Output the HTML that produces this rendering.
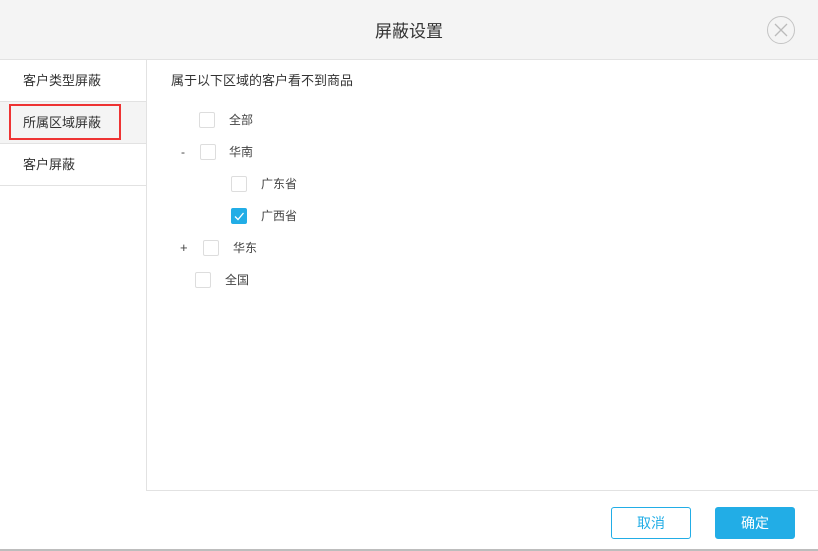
<!DOCTYPE html>
<html><head><meta charset="utf-8"><style>
*{margin:0;padding:0;box-sizing:border-box}
body{width:818px;height:551px;background:#fff;font-family:"Liberation Sans","Noto Sans CJK SC",sans-serif;color:#333;position:relative;overflow:hidden;font-size:13px}
.hdr{position:absolute;left:0;top:0;width:818px;height:60px;background:#f4f4f4;border-bottom:1px solid #e2e2e2}
.hdr .t{position:absolute;left:0;right:0;top:17px;text-align:center;font-size:17px;color:#333}
.close{position:absolute;left:767px;top:16px;width:28px;height:28px;border:1px solid #c4c4c4;border-radius:50%}
.side{position:absolute;left:0;top:60px;width:147px;height:430px;border-right:1px solid #e2e2e2}
.it{height:42px;border-bottom:1px solid #e2e2e2;line-height:41px;padding-left:23px;font-size:13px}
.it.a{background:#f4f4f4}
.red{position:absolute;left:9px;top:44px;width:112px;height:36px;border:2px solid #ee3333}
.foot{position:absolute;left:146px;top:490px;right:0;border-top:1px solid #e2e2e2}
.bb{position:absolute;left:0;right:0;top:549px;height:2px;background:#bdbdbd}
.l{position:absolute;font-size:12px;color:#444;line-height:14px}
.cb{position:absolute;width:16px;height:16px;border:1px solid #ddd;border-radius:2px;background:#fff}
.cb.on{background:#22ade6;border-color:#22ade6}
.btn{position:absolute;top:507px;height:32px;width:80px;border-radius:3px;text-align:center;line-height:30px;font-size:14px}
</style></head><body>
<div class="hdr"><div class="t">屏蔽设置</div>
<div class="close"><svg width="26" height="26" viewBox="0 0 26 26"><path d="M7 7L19 19M19 7L7 19" stroke="#bbb" stroke-width="1.3" fill="none"/></svg></div></div>
<div class="side">
<div class="it">客户类型屏蔽</div>
<div class="it a">所属区域屏蔽</div>
<div class="it">客户屏蔽</div>
<div class="red"></div>
</div>
<div class="l" style="left:171px;top:74px;font-size:13px;color:#333">属于以下区域的客户看不到商品</div>
<div class="cb" style="left:199px;top:112px"></div><div class="l" style="left:229px;top:113px">全部</div>
<div class="l" style="left:181px;top:145px">-</div>
<div class="cb" style="left:200px;top:144px"></div><div class="l" style="left:229px;top:145px">华南</div>
<div class="cb" style="left:231px;top:176px"></div><div class="l" style="left:261px;top:177px">广东省</div>
<div class="cb on" style="left:231px;top:208px"><svg width="14" height="14" viewBox="0 0 14 14" style="position:absolute;left:0;top:0"><path d="M3 7.5L6 10.5L11.5 4" stroke="#fff" stroke-width="1.3" fill="none"/></svg></div><div class="l" style="left:261px;top:209px">广西省</div>
<div class="l" style="left:180px;top:241px;font-size:13px">+</div>
<div class="cb" style="left:203px;top:240px"></div><div class="l" style="left:233px;top:241px">华东</div>
<div class="cb" style="left:195px;top:272px"></div><div class="l" style="left:225px;top:273px">全国</div>
<div class="foot"></div>
<div class="btn" style="left:611px;border:1px solid #22ade6;color:#22ade6;background:#fff">取消</div>
<div class="btn" style="left:715px;background:#22ade6;color:#fff;border:1px solid #22ade6">确定</div>
<div class="bb"></div>
</body></html>
